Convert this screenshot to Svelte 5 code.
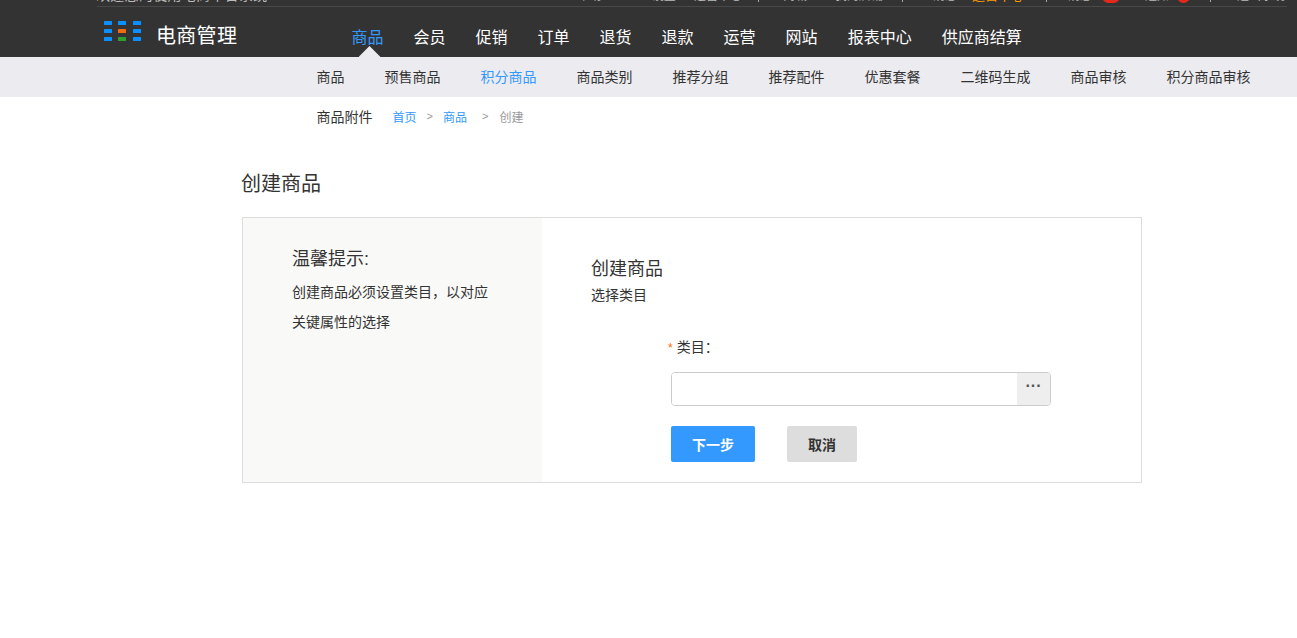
<script>
	const mainNav = ['商品', '会员', '促销', '订单', '退货', '退款', '运营', '网站', '报表中心', '供应商结算'];
	const subNav = ['商品', '预售商品', '积分商品', '商品类别', '推荐分组', '推荐配件', '优惠套餐', '二维码生成', '商品审核', '积分商品审核'];

	// top strip is scrolled almost out of view, only the feet of the text show
	const topLinks = [
		{ text: '帮助', gap: 0 },
		{ text: '设置', gap: 50 },
		{ text: '运营中心', gap: 18 },
		{ kind: 'bar', gap: 16 },
		{ text: '商城', gap: 24 },
		{ text: '我的店铺', gap: 28 },
		{ kind: 'bar', gap: 19 },
		{ text: '消息', gap: 30 },
		{ text: '运营中心', gap: 15, kind: 'orange' },
		{ kind: 'bar', gap: 22 },
		{ text: '消息', gap: 21 },
		{ kind: 'badge wide', gap: 10 },
		{ text: '通知', gap: 25 },
		{ kind: 'badge', gap: 8 },
		{ kind: 'bar', gap: 20 },
		{ text: '退出系统', gap: 26 }
	];
</script>

<div class="page">
	<header class="header">
		<div class="topbar">
			<div class="topline">
				<span class="welcome">欢迎您的使用电商平台系统</span>
				<div class="toplinks">
					{#each topLinks as link}
						<span class="toplink {link.kind || ''}" style="margin-left: {link.gap}px">{link.text || ''}</span>
					{/each}
				</div>
			</div>
		</div>
		<div class="mainbar">
			<div class="logo">
				<svg width="38" height="21" viewBox="0 0 38 21">
					<rect x="0" y="0" width="8" height="4" rx="0.5" fill="#0b90ff" />
					<rect x="14" y="0" width="8" height="4" rx="0.5" fill="#0b90ff" />
					<rect x="29" y="0" width="8" height="4" rx="0.5" fill="#0b90ff" />
					<rect x="0" y="8" width="8" height="4" rx="0.5" fill="#0b90ff" />
					<rect x="14" y="8" width="8" height="4" rx="0.5" fill="#f26a0f" />
					<rect x="29" y="8" width="8" height="4" rx="0.5" fill="#0b90ff" />
					<rect x="0" y="16" width="8" height="4" rx="0.5" fill="#0b90ff" />
					<rect x="14" y="16" width="8" height="4" rx="0.5" fill="#2f9e30" />
					<rect x="29" y="16" width="8" height="4" rx="0.5" fill="#0b90ff" />
				</svg>
				<span>电商管理</span>
			</div>
			<nav class="mainnav">
				{#each mainNav as item, i}
					<a class:active={i === 0}>{item}</a>
				{/each}
			</nav>
		</div>
	</header>

	<div class="subbar">
		<div class="subnav">
			{#each subNav as item, i}
				<a class:active={i === 2}>{item}</a>
			{/each}
		</div>
	</div>

	<div class="crumbrow">
		<a class="lastsub">商品附件</a>
		<a class="link">首页</a>
		<span class="sep">&gt;</span>
		<a class="link">商品</a>
		<span class="sep second">&gt;</span>
		<span class="current">创建</span>
	</div>

	<main class="content">
		<h1>创建商品</h1>
		<section class="card">
			<aside class="tips">
				<h3>温馨提示:</h3>
				<p>创建商品必须设置类目，以对应关键属性的选择</p>
			</aside>
			<div class="formside">
				<h2>创建商品</h2>
				<div class="step">选择类目</div>
				<form class="form">
					<label class="label"><em>*</em>类目：</label>
					<div class="picker">
						<input type="text" />
						<button type="button" class="more">···</button>
					</div>
					<div class="actions">
						<button type="button" class="btn primary">下一步</button>
						<button type="button" class="btn">取消</button>
					</div>
				</form>
			</div>
		</section>
	</main>
</div>

<style>
	:global(body) {
		background: #fff;
		font-family: "Liberation Sans", "Noto Sans CJK SC", sans-serif;
		color: #333;
	}

	.page {
		height: 638px;
		overflow: hidden;
	}

	.header {
		background: #333;
		height: 57px;
	}

	.topbar {
		height: 7px;
		padding: 0 10px 0 97px;
		overflow: hidden;
	}

	.topline {
		height: 6px;
		border-bottom: 1px solid #484848;
		display: flex;
		justify-content: space-between;
		overflow: hidden;
	}

	.welcome {
		font-size: 14px;
		line-height: 14px;
		letter-spacing: 0.3px;
		color: #bbb;
		margin: -12px 0 0 -1px;
		white-space: nowrap;
	}

	.toplinks {
		display: flex;
		align-items: flex-start;
		padding-right: 2px;
	}

	.toplink {
		display: block;
		flex: none;
		font-size: 12px;
		line-height: 12px;
		color: #bbb;
		margin-top: -10px;
		white-space: nowrap;
	}

	.toplink.orange {
		color: #f90;
		font-size: 13px;
	}

	.toplink.bar {
		width: 1px;
		height: 2px;
		margin-top: 0;
		background: #aaa;
	}

	.toplink.badge {
		width: 13px;
		height: 13px;
		margin-top: -10px;
		border-radius: 50%;
		background: #e5281c;
	}

	.toplink.badge.wide {
		width: 18px;
		border-radius: 7px;
	}

	.mainbar {
		height: 50px;
		display: flex;
		padding-left: 104px;
	}

	.logo {
		display: flex;
		align-items: flex-start;
		width: 247.500px;
		flex: none;
	}

	.logo svg {
		margin-top: 14px;
	}

	.logo span {
		font-size: 20px;
		line-height: 28px;
		letter-spacing: 0.3px;
		color: #fff;
		margin: 15px 0 0 14px;
	}

	.mainnav {
		display: flex;
		gap: 30px;
		padding-top: 20px;
		height: 30px;
		box-sizing: border-box;
	}

	.mainnav a {
		position: relative;
		font-size: 16px;
		line-height: 20px;
		padding-top: 1px;
		color: #fff;
		white-space: nowrap;
	}

	.mainnav a.active {
		color: #39f;
	}

	.mainnav a.active::after {
		content: "";
		position: absolute;
		left: 7px;
		top: 19px;
		width: 22px;
		height: 11px;
		background: #ecebf0;
		clip-path: polygon(50% 0, 100% 100%, 0 100%);
	}

	.subbar {
		background: #ecebf0;
		height: 40px;
	}

	.subnav {
		display: flex;
		gap: 40px;
		padding-left: 316.500px;
		font-size: 14px;
		line-height: 40px;
		white-space: nowrap;
	}

	.subnav a.active {
		color: #39f;
	}

	.crumbrow {
		display: flex;
		align-items: center;
		height: 38px;
		padding-left: 316.500px;
		font-size: 12px;
	}

	.lastsub {
		font-size: 14px;
		margin-right: 20px;
	}

	.link {
		color: #39f;
	}

	.sep {
		color: #999;
		font-size: 11px;
		margin: 0 10px;
	}

	.sep.second {
		margin: 0 11px 0 15px;
	}

	.current {
		color: #999;
	}

	.content {
		width: 900px;
		margin-left: 242px;
		box-sizing: border-box;
	}

	h1 {
		margin: 36px 0 19px -1px;
		font-size: 20px;
		font-weight: normal;
		line-height: 27px;
	}

	.card {
		display: flex;
		height: 266px;
		box-sizing: border-box;
		border: 1px solid #ddd;
	}

	.tips {
		width: 299px;
		flex: none;
		box-sizing: border-box;
		padding: 29px 49px 0;
		background: #f9f9f7;
	}

	h3 {
		margin: 0;
		font-size: 18px;
		font-weight: normal;
		line-height: 24px;
	}

	.tips p {
		margin: 6px 0 0;
		font-size: 14px;
		line-height: 30px;
	}

	.formside {
		flex: 1;
		padding: 38px 0 0 49px;
	}

	h2 {
		margin: 0;
		font-size: 18px;
		font-weight: normal;
		line-height: 26px;
	}

	.step {
		margin-top: 3px;
		font-size: 14px;
		line-height: 20px;
	}

	.form {
		width: 380px;
		margin: 32px 0 0 80px;
	}

	.label {
		display: block;
		font-size: 14px;
		line-height: 20px;
		margin-left: -3px;
	}

	.label em {
		color: #f60;
		font-style: normal;
		font-size: 12px;
		margin-right: 4px;
	}

	.picker {
		display: flex;
		height: 34px;
		margin-top: 14px;
		box-sizing: border-box;
		border: 1px solid #ccc;
		border-radius: 4px;
		overflow: hidden;
	}

	.picker input {
		flex: 1;
		min-width: 0;
		border: 0;
		padding: 0;
		outline: 0;
	}

	.more {
		width: 33px;
		border: 0;
		padding: 0 0 6px;
		background: #eee;
		color: #555;
		font: bold 16px "Liberation Sans", sans-serif;
	}

	.actions {
		display: flex;
		gap: 32px;
		margin-top: 20px;
	}

	.btn {
		width: 70px;
		height: 36px;
		border: 0;
		border-radius: 2px;
		background: #ddd;
		color: #333;
		font: bold 14px "Liberation Sans", "Noto Sans CJK SC", sans-serif;
	}

	.btn.primary {
		width: 84px;
		background: #39f;
		color: #fff;
	}
</style>
